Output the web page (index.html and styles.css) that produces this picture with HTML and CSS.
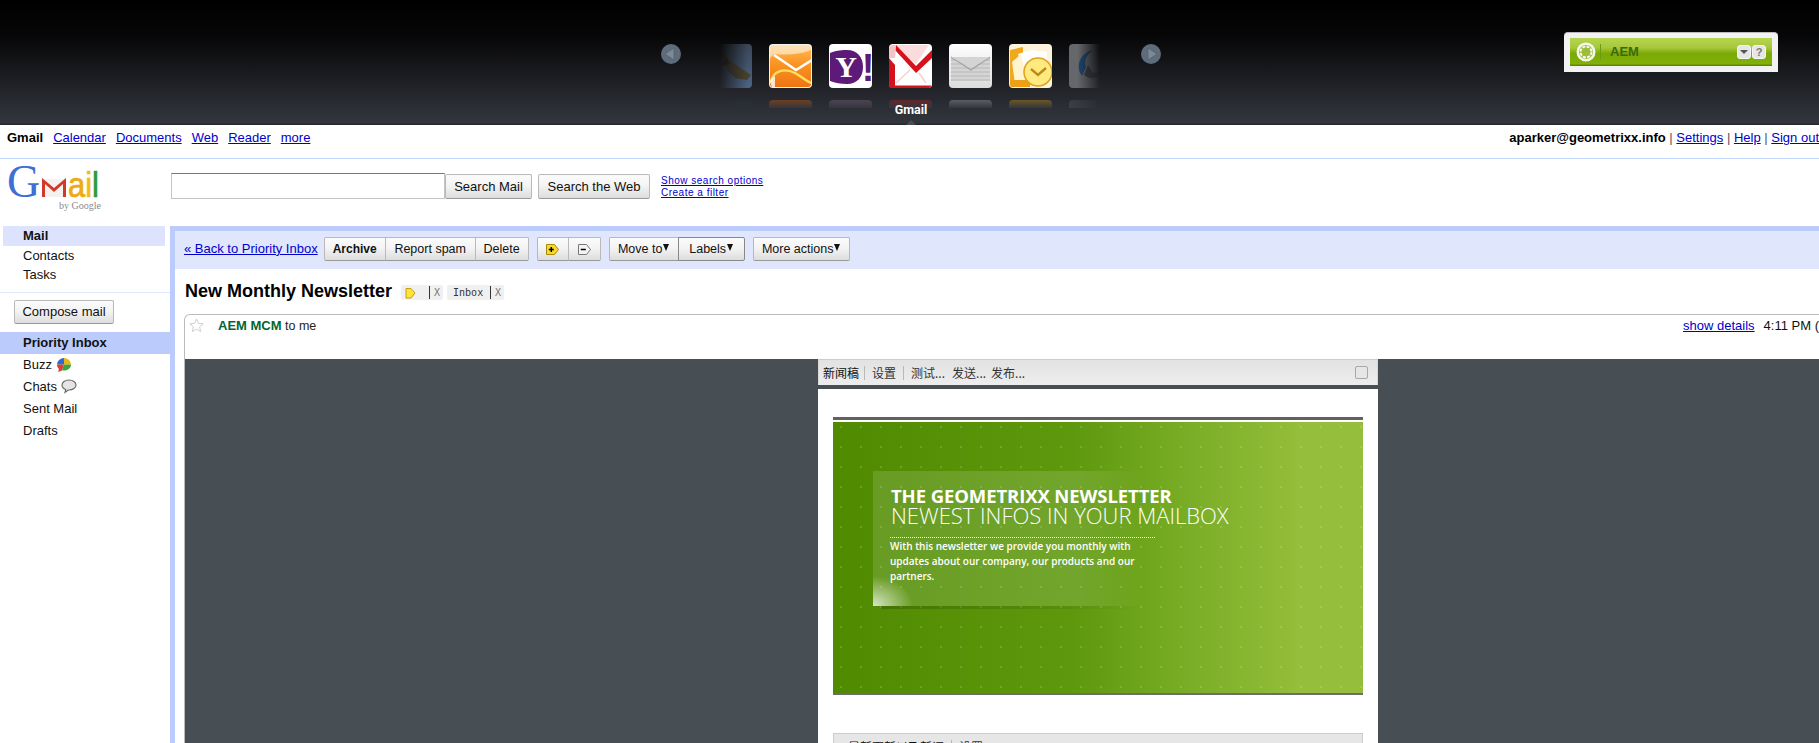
FILE: index.html
```html
<!DOCTYPE html>
<html lang="en">
<head>
  <meta charset="UTF-8">
  <title>Gmail - New Monthly Newsletter</title>
  <link rel="stylesheet" href="styles.css">
</head>
<body>
<div class="page">

  <header class="dock">
    <div class="carousel">
      <svg class="arrow" viewBox="0 0 20 20"><circle cx="10" cy="10" r="10" fill="#5f6c7c"/><path d="M4 10l9-6v12z" fill="#7d8997" stroke="#4f5a68" stroke-width=".6"/></svg>

      <div class="tile tile-first">
        <svg viewBox="0 0 43 44">
          <defs><linearGradient id="hkBg" x1="0" y1="0" x2="0" y2="1"><stop offset="0" stop-color="#3a4556"/><stop offset="1" stop-color="#4c6484"/></linearGradient></defs>
          <rect width="43" height="44" rx="4" fill="url(#hkBg)"/>
          <path d="M12 6l8 9 10 8 12 8-4 5-12-2-8-8-5-10z" fill="#4a412c"/>
          <path d="M18 14l-6 8 8-2z" fill="#2c261a"/>
        </svg>
        <div class="shine shine-hawk"></div>
      </div>

      <div class="tile">
        <svg viewBox="0 0 43 44">
          <defs><linearGradient id="hmBg" x1="0" y1="0" x2="0" y2="1"><stop offset="0" stop-color="#ffbe5c"/><stop offset=".45" stop-color="#fa9422"/><stop offset="1" stop-color="#ee7414"/></linearGradient></defs>
          <rect width="43" height="44" rx="4" fill="#f4f4f4"/>
          <rect x="1" y="1" width="41" height="42" rx="3" fill="url(#hmBg)"/>
          <path d="M1 1h41v5C30 11 16 11 5 10L1 14z" fill="#fff" opacity=".55"/>
          <path d="M5 11l22 15 16-10" fill="none" stroke="#fff" stroke-width="2.6"/>
          <path d="M2 38c2-12 14-14 24-9 7 4 11 8 16 10" fill="none" stroke="#ffe05c" stroke-width="2.4"/>
          <path d="M1 38c1-3 3-5 5-6v11H3z" fill="#fff" opacity=".8"/>
        </svg>
        <div class="shine shine-hotmail"></div>
      </div>

      <div class="tile">
        <svg viewBox="0 0 43 44">
          <rect width="43" height="44" rx="4" fill="#fff"/>
          <path d="M1 9C8 6 14 6 18 6c10 0 16 7 16 17s-6 17-16 17c-6 0-12-1-17-3z" fill="#5e1a78"/>
          <text class="yh-letter" x="17" y="33">Y</text>
          <text class="yh-bang" x="39" y="37">!</text>
        </svg>
        <div class="shine shine-yahoo"></div>
      </div>

      <div class="tile">
        <svg viewBox="0 0 43 44">
          <rect width="43" height="44" rx="4" fill="#fff"/>
          <path d="M3 1h37l-13 19z" fill="#fbdcdc"/>
          <path d="M0 14l6 7v23H3a3 3 0 0 1-3-3z" fill="#d5121c"/>
          <path d="M1 41.500h41v.5a2 2 0 0 1-2 2H3a2 2 0 0 1-2-2z" fill="#d5121c"/>
          <path d="M7 1l20 21L43 6v8L27 29 6 6z" fill="#d5121c"/>
          <path d="M7 39l14-13M37 39L30 29" stroke="#f6d0d1" stroke-width="1.500"/>
          <path d="M0 4a4 4 0 0 1 4-3l3 1-1 12H0z" fill="#f6c4c6"/>
        </svg>
        <div class="shine shine-gmail"></div>
      </div>

      <div class="tile">
        <svg viewBox="0 0 43 44">
          <defs><linearGradient id="grBg" x1="0" y1="0" x2="0" y2="1"><stop offset="0" stop-color="#fff"/><stop offset=".35" stop-color="#f2f2f2"/><stop offset="1" stop-color="#dcdcdc"/></linearGradient></defs>
          <rect width="43" height="44" rx="4" fill="url(#grBg)"/>
          <path d="M2 13h39v24H2z" fill="#c6c6c6"/>
          <path d="M1 18h41M1 22h41M1 26h41M1 30h41M1 34h41" stroke="#fff" stroke-width="1" opacity=".5"/>
          <path d="M2 13l20 13 19-13" fill="none" stroke="#a2a2a2" stroke-width="1.300"/>
          <path d="M2 13h39L22 24z" fill="#d4d4d4"/>
        </svg>
        <div class="shine shine-grey"></div>
      </div>

      <div class="tile">
        <svg viewBox="0 0 43 44">
          <rect width="43" height="44" rx="4" fill="#fdf3dc"/>
          <path d="M1 6l13-3v38H3a2 2 0 0 1-2-2z" fill="#f2a81d"/>
          <path d="M9 10l13-4 16 2v14H14z" fill="#fff"/>
          <path d="M3 18l9-8 6 30H6z" fill="#fff3d0"/>
          <path d="M1 36h20v7H3a2 2 0 0 1-2-2z" fill="#eca017"/>
          <circle cx="29" cy="28" r="14" fill="#ffe981" stroke="#dfa31c" stroke-width="1.500"/>
          <path d="M22 25l7 6 8-7" fill="none" stroke="#c08a14" stroke-width="2.400"/>
        </svg>
        <div class="shine shine-outlook"></div>
      </div>

      <div class="tile tile-last">
        <svg viewBox="0 0 43 44">
          <rect width="43" height="44" rx="4" fill="#66676b"/>
          <path d="M13 32C6 22 11 9 24 6c-7 5-9 11-7 17z" fill="#1d456e"/>
          <path d="M15 31c6 5 13 4 18-3l-9 1-5-8z" fill="#3a3c42"/>
        </svg>
        <div class="shine shine-bird"></div>
      </div>

      <svg class="arrow" viewBox="0 0 20 20"><circle cx="10" cy="10" r="10" fill="#5f6c7c"/><path d="M16 10l-9-6v12z" fill="#7d8997" stroke="#4f5a68" stroke-width=".6"/></svg>

      <div class="dock-label">Gmail</div>
      <div class="dock-caret"></div>
    </div>

    <div class="gadget">
      <div class="gadget-bar">
        <svg class="gadget-logo" viewBox="0 0 20 20"><circle cx="10" cy="10" r="9.500" fill="#f6f9ee"/><circle cx="10" cy="10" r="7" fill="#9cbc3a"/><circle cx="10" cy="10" r="5.500" fill="none" stroke="#fff" stroke-width="1.800" stroke-dasharray="3 1.300"/></svg>
        <span class="gadget-name">AEM</span>
        <span class="gadget-btn"><i class="gadget-down"></i></span>
        <span class="gadget-btn gadget-help">?</span>
      </div>
    </div>
  </header>

  <nav class="topnav">
    <div class="topnav-left">
      <b class="topnav-current">Gmail</b>
      <a href="#">Calendar</a>
      <a href="#">Documents</a>
      <a href="#">Web</a>
      <a href="#">Reader</a>
      <a href="#">more</a>
    </div>
    <div class="topnav-right">
      <b>aparker@geometrixx.info</b> | <a href="#">Settings</a> | <a href="#">Help</a> | <a href="#">Sign out</a>
    </div>
  </nav>

  <div class="searchbar">
    <svg class="gmail-logo" viewBox="0 0 94 48">
      <text class="logo-g" x="0" y="33">G</text>
      <path d="M35 15h24v18H35z" fill="#f4f1ee"/>
      <path d="M35 33V14l12 10 12-10v19h-3V20l-9 8-9-8v13z" fill="#d3392b"/>
      <text class="logo-ail" x="61" y="33" textLength="31" lengthAdjust="spacingAndGlyphs"><tspan fill="#efa912" stroke="#efa912">a</tspan><tspan fill="#f2bb12" stroke="#f2bb12">i</tspan><tspan fill="#2c9a3e" stroke="#2c9a3e">l</tspan></text>
      <text class="logo-by" x="52" y="45">by Google</text>
    </svg>
    <form class="search-form">
      <input class="search-input" type="text">
      <button class="btn search-mail" type="button">Search Mail</button>
      <button class="btn search-web" type="button">Search the Web</button>
      <div class="search-links">
        <a href="#">Show search options</a>
        <a href="#">Create a filter</a>
      </div>
    </form>
  </div>

  <div class="content">
    <aside class="sidebar">
      <ul class="side-top">
        <li class="side-mail">Mail</li>
        <li>Contacts</li>
        <li>Tasks</li>
      </ul>
      <div class="compose-wrap">
        <button class="btn compose" type="button">Compose mail</button>
      </div>
      <ul class="side-labels">
        <li class="side-active">Priority Inbox</li>
        <li>Buzz
          <svg class="side-icon" viewBox="0 0 16 16"><path d="M8 1a7 6.500 0 0 1 7 6.500H8z" fill="#e9b80f"/><path d="M8 1a7 6.500 0 0 0-7 6.500h7z" fill="#2f68d8"/><path d="M1 7.500c0 2 1 3.500 2 4.500l-1 3 4-1.500 2-6z" fill="#d5402f"/><path d="M15 7.500c0 3.500-3 6-7 6-.7 0-1.400 0-2-.2L8 7.500z" fill="#3fa43d"/></svg>
        </li>
        <li>Chats
          <svg class="side-icon chat-icon" viewBox="0 0 16 15"><path d="M8 1c4 0 7 2.300 7 5s-3 5-7 5l-1 .2-3 2.300.7-3C2.300 9.600 1 8 1 6c0-2.700 3-5 7-5z" fill="#e4e4e4" stroke="#666" stroke-width="1.100"/></svg>
        </li>
        <li>Sent Mail</li>
        <li>Drafts</li>
      </ul>
    </aside>

    <main class="panel">
      <div class="toolbar">
        <a class="back-link" href="#">« Back to Priority Inbox</a>
        <div class="btn-group">
          <button class="btn btn-strong" type="button">Archive</button>
          <button class="btn btn-spam" type="button">Report spam</button>
          <button class="btn btn-delete" type="button">Delete</button>
        </div>
        <div class="btn-group">
          <button class="btn btn-icon" type="button">
            <svg viewBox="0 0 15 13"><path d="M1.500 1.500h8l4 5-4 5h-8z" fill="#f7d92c" stroke="#a98a06"/><path d="M3.800 6.500h5M6.300 4v5" stroke="#000" stroke-width="1.500"/></svg>
          </button>
          <button class="btn btn-icon" type="button">
            <svg viewBox="0 0 15 13"><path d="M1.500 1.500h8l4 5-4 5h-8z" fill="#f4f4f4" stroke="#777"/><path d="M3.800 6.500h5" stroke="#000" stroke-width="1.500"/></svg>
          </button>
        </div>
        <div class="btn-group">
          <button class="btn btn-move" type="button">Move to<i class="caret"></i></button>
          <button class="btn btn-labels" type="button">Labels<i class="caret"></i></button>
        </div>
        <div class="btn-group">
          <button class="btn btn-more" type="button">More actions<i class="caret"></i></button>
        </div>
      </div>

      <div class="subject">
        <h1>New Monthly Newsletter</h1>
        <span class="tag tag-first">
          <svg class="tag-icon" viewBox="0 0 11 12"><path d="M1 1.500h5l4 4.500-4 5H1z" fill="#fde53a" stroke="#c79b12"/></svg>
          <span class="tag-x">X</span>
        </span>
        <span class="tag tag-inbox">Inbox<span class="tag-x">X</span></span>
      </div>

      <div class="message">
        <div class="message-head">
          <svg class="star" viewBox="0 0 16 16"><path d="M8 1l2.100 4.700 5 .5-3.800 3.300 1.100 5L8 11.900l-4.400 2.600 1.100-5L.9 6.200l5-.5z" fill="#fff" stroke="#ccc"/></svg>
          <span class="sender"><b>AEM MCM</b> to me</span>
          <span class="message-meta"><a href="#">show details</a><span class="message-time">4:11 PM (9 minutes ago)</span></span>
        </div>

        <div class="message-body">
          <div class="newsletter">
            <div class="cq-bar">
              <span class="cq-main">新闻稿</span>
              <span class="cq-item">设置</span>
              <span class="cq-item">测试...</span>
              <span class="cq-plain">发送...</span>
              <span class="cq-plain">发布...</span>
              <i class="cq-check"></i>
            </div>
            <div class="sheet">
              <div class="rule-top"></div>
              <div class="banner">
                <div class="promo">
                  <div class="promo-title">THE GEOMETRIXX NEWSLETTER</div>
                  <div class="promo-sub">NEWEST INFOS IN YOUR MAILBOX</div>
                  <p class="promo-text">With this newsletter we provide you monthly with<br>updates about our company, our products and our<br>partners.</p>
                </div>
              </div>
              <div class="rule-bottom"></div>
              <div class="cq-bar cq-bar-second">
                <span class="cq-main">最新更新以及新闻</span>
                <span class="cq-item">设置</span>
              </div>
            </div>
          </div>
        </div>
      </div>
    </main>
  </div>

</div>
</body>
</html>
```

FILE: styles.css
```css
html, body {
  margin: 0;
  height: 743px;
  overflow: hidden;
  background-color: #ffffff;
}

body {
  font-family: "Liberation Sans", Arial, sans-serif;
  font-size: 13px;
  color: #000000;
}

a {
  color: #0000cc;
}

ul {
  list-style: none;
  margin: 0;
  padding: 0;
}

.page {
  width: 2016px;
}

/* dock */
.dock {
  display: flex;
  align-items: flex-start;
  height: 125px;
  padding-left: 661px;
  box-sizing: border-box;
  background: linear-gradient(#000000 0, #060607 28%, #33363e 98%, #222326 100%);
}

.carousel {
  position: relative;
  display: flex;
  align-items: flex-start;
  width: 500px;
  height: 125px;
  padding-top: 44px;
  box-sizing: border-box;
}

.arrow {
  width: 20px;
  height: 20px;
  flex: none;
}

.tile {
  width: 43px;
  margin-left: 17px;
  flex: none;
}

.tile svg {
  display: block;
  width: 43px;
  height: 44px;
}

.tile-first {
  margin-left: 28px;
}

.tile-last {
  margin-right: 29px;
}

.tile-first svg {
  -webkit-mask-image: linear-gradient(to right, transparent 25%, #000 90%);
  mask-image: linear-gradient(to right, transparent 25%, #000 90%);
}

.tile-last svg {
  -webkit-mask-image: linear-gradient(to right, #000 20%, transparent 72%);
  mask-image: linear-gradient(to right, #000 20%, transparent 72%);
}

.shine {
  height: 8px;
  margin-top: 12px;
  border-radius: 4px 4px 0 0;
}

.shine-hawk { background: linear-gradient(to right, transparent 30%, #2a2f38); opacity: .8; }
.shine-hotmail { background: linear-gradient(#6f3f20, #33363e); }
.shine-yahoo { background: linear-gradient(#4c4252, #33363e); }
.shine-gmail { background: linear-gradient(#64262a, #33363e); }
.shine-grey { background: linear-gradient(#5c5d60, #33363e); }
.shine-outlook { background: linear-gradient(#6c5724, #33363e); }
.shine-bird { background: linear-gradient(to right, #3d3f44, transparent 70%); }

.dock-label {
  position: absolute;
  left: 0;
  right: 0;
  top: 103px;
  text-align: center;
  font-family: Roboto, sans-serif;
  font-size: 12.500px;
  font-weight: 700;
  line-height: 14px;
  color: #ffffff;
}

.dock-caret {
  position: absolute;
  left: 245px;
  bottom: 0;
  width: 10px;
  height: 5px;
  background-color: #4a4c52;
  clip-path: polygon(50% 0, 100% 100%, 0 100%);
}

/* AEM gadget */
.gadget {
  margin: 32px 0 0 403px;
  width: 214px;
  height: 40px;
  padding: 5px 6px 6px;
  box-sizing: border-box;
  background-color: #f2f2f2;
  border-radius: 4px 4px 0 0;
  border-top: 1px solid #bbbbbb;
}

.gadget-bar {
  display: flex;
  align-items: center;
  height: 28px;
  padding: 0 6px;
  box-sizing: border-box;
  background: linear-gradient(#b7d552 0, #a6c83a 35%, #7ba905 55%, #82b00a 92%, #4f7a00 100%);
}

.gadget-logo {
  width: 20px;
  height: 20px;
  flex: none;
}

.gadget-name {
  flex: 1;
  margin-left: 4px;
  padding-left: 9px;
  border-left: 1px solid #6f9a12;
  font-size: 13px;
  font-weight: 700;
  line-height: 16px;
  color: #3c6a0a;
}

.gadget-btn {
  display: flex;
  align-items: center;
  justify-content: center;
  width: 14px;
  height: 14px;
  margin-left: 1px;
  background-color: #e6e6e6;
  border-radius: 3px;
  border: 1px solid #f6f6f6;
  box-sizing: border-box;
}

.gadget-down {
  border-left: 4px solid transparent;
  border-right: 4px solid transparent;
  border-top: 4px solid #555555;
}

.gadget-help {
  font-size: 11px;
  font-weight: 700;
  color: #777777;
}

/* top links */
.topnav {
  display: flex;
  justify-content: space-between;
  height: 34px;
  padding: 5px 197px 0 7px;
  box-sizing: border-box;
  border-bottom: 1px solid #c3d9ff;
  line-height: 15px;
  color: #555555;
}

.topnav-left {
  display: flex;
  gap: 10px;
}

.topnav-current {
  color: #000000;
}

.topnav-right b {
  color: #000000;
}

/* logo and search */
.searchbar {
  display: flex;
  height: 67px;
  padding-left: 7px;
}

.gmail-logo {
  width: 94px;
  height: 48px;
  margin-top: 5px;
  flex: none;
}

.logo-g {
  font-family: "Liberation Serif", serif;
  font-size: 46px;
  fill: #3f6fd6;
}

.logo-ail {
  font-family: "Liberation Sans", sans-serif;
  font-size: 35px;
  stroke-width: .7px;
}

.logo-by {
  font-family: "Liberation Serif", serif;
  font-size: 10px;
  fill: #8a8a8a;
}

.search-form {
  display: flex;
  align-items: flex-start;
  margin: 14px 0 0 70px;
}

.search-input {
  width: 274px;
  height: 26px;
  padding: 0;
  box-sizing: border-box;
  border: 1px solid #c4c4c4;
  border-top-color: #777777;
}

.search-links {
  display: flex;
  flex-direction: column;
  margin: 2px 0 0 11px;
  font-size: 10px;
  line-height: 12px;
  letter-spacing: .5px;
}

.btn {
  height: 24px;
  padding: 0;
  font-family: inherit;
  font-size: 12.500px;
  color: #111111;
  background: linear-gradient(#fbfbfb 0, #f4f4f4 45%, #dddddd 100%);
  border: 1px solid #b9b9b9;
  border-bottom-color: #999999;
  border-radius: 2px;
  white-space: nowrap;
}

.search-mail {
  width: 87px;
  height: 25px;
  margin-top: 1px;
  font-size: 13px;
}

.search-web {
  width: 112px;
  height: 25px;
  margin: 1px 0 0 6px;
  font-size: 13px;
}

/* main area */
.content {
  display: flex;
}

.sidebar {
  width: 170px;
  flex: none;
}

.side-top {
  padding-bottom: 7px;
  border-bottom: 1px solid #e0e6fc;
}

.side-top li {
  height: 19.500px;
  padding-left: 23px;
  line-height: 19px;
  color: #111111;
}

.side-top .side-mail {
  margin: 0 5px 0 3px;
  padding-left: 20px;
  font-weight: 700;
  background-color: #dde3fd;
}

.compose-wrap {
  padding: 7px 0 8px 14px;
}

.compose {
  display: block;
  width: 100px;
  font-size: 13px;
}

.side-labels li {
  display: flex;
  align-items: center;
  gap: 4px;
  height: 22px;
  padding-left: 23px;
  color: #111111;
}

.side-labels .side-active {
  font-weight: 700;
  background-color: #bbccfc;
}

.side-icon {
  width: 16px;
  height: 16px;
}

.chat-icon {
  height: 15px;
}

.panel {
  flex: 1;
  min-width: 0;
  border-left: 5px solid #bbccfc;
  border-top: 5px solid #bbccfc;
}

.toolbar {
  display: flex;
  align-items: center;
  height: 38px;
  padding: 0 0 2px 9px;
  box-sizing: border-box;
  background-color: #e0e6fc;
}

.back-link {
  margin: 0 6px 2px 0;
}

.btn-group {
  display: flex;
  margin-right: 8px;
}

.btn-group .btn {
  margin-left: -1px;
  border-radius: 0;
}

.btn-group .btn:first-child {
  margin-left: 0;
  border-radius: 2px 0 0 2px;
}

.btn-group .btn:last-child {
  border-radius: 0 2px 2px 0;
}

.btn-group .btn:only-child {
  border-radius: 2px;
}

.btn-strong {
  width: 62px;
  font-size: 12px;
  font-weight: 700;
}

.btn-spam {
  width: 91px;
}

.btn-delete {
  width: 54px;
}

.btn-icon {
  width: 32.500px;
}

.btn-icon svg {
  display: block;
  width: 15px;
  height: 13px;
  margin: 0 auto;
}

.btn-move {
  width: 70px;
}

.btn-labels {
  width: 67px;
  border-color: #888888;
}

.btn-more {
  width: 97px;
}

.caret {
  display: inline-block;
  margin-left: 1px;
  vertical-align: 2px;
  border-left: 3.500px solid transparent;
  border-right: 3.500px solid transparent;
  border-top: 7px solid #111111;
}

.subject {
  display: flex;
  align-items: center;
  height: 45px;
  padding: 0 0 1px 10px;
  box-sizing: border-box;
}

.subject h1 {
  margin: 0 9px 0 0;
  font-size: 18px;
  line-height: 22px;
}

.tag {
  display: flex;
  align-items: center;
  justify-content: space-between;
  height: 15px;
  margin: 2px 4px 0 0;
  padding: 0 3px 0 6px;
  box-sizing: border-box;
  background-color: #f0f0f0;
  border-radius: 2px;
  font-family: "DejaVu Sans Mono", monospace;
  font-size: 10px;
  color: #333333;
}

.tag-first {
  width: 42px;
  padding-left: 4px;
}

.tag-inbox {
  width: 57px;
}

.tag-icon {
  width: 11px;
  height: 12px;
  margin-top: 2px;
}

.tag-x {
  padding-left: 4px;
  border-left: 1px solid #333333;
  line-height: 13px;
  color: #777777;
}

.message {
  margin: 0 4px 0 9px;
  border: 1px solid #bbbbbb;
  border-bottom: none;
  border-top-left-radius: 6px;
}

.message-head {
  display: flex;
  align-items: flex-start;
  height: 44px;
  padding: 2px 0 0 4px;
  box-sizing: border-box;
  font-size: 12.500px;
  line-height: 15px;
}

.star {
  width: 15px;
  height: 15px;
  margin-top: 1px;
  flex: none;
}

.sender {
  margin: 1px 0 0 14px;
  color: #222222;
}

.sender b {
  font-size: 13px;
  color: #006633;
}

.message-meta {
  margin: 1px 0 0 auto;
  padding-right: 106px;
  font-size: 13px;
  white-space: nowrap;
}

.message-time {
  margin-left: 9px;
  color: #111111;
}

.message-body {
  height: 400px;
  background-color: #474f55;
}

/* newsletter inside the mail */
.newsletter {
  width: 560px;
  margin: 0 auto;
}

.cq-bar {
  display: flex;
  align-items: center;
  height: 26px;
  padding-left: 4px;
  box-sizing: border-box;
  border-top: 1px solid #cccccc;
  border-left: 1px solid #d8d8d8;
  border-right: 1px solid #d8d8d8;
  background: linear-gradient(#e2e2e2, #ededed);
  font-family: "Noto Sans CJK SC", sans-serif;
  font-size: 12px;
  color: #333333;
}

.cq-main {
  padding-right: 5px;
  color: #111111;
}

.cq-item {
  padding: 0 7px;
  border-left: 1px solid #b8b8b8;
  line-height: 14px;
}

.cq-plain {
  margin-right: 5px;
}

.cq-check {
  width: 11px;
  height: 11px;
  margin-left: auto;
  margin-right: 9px;
  background-color: #e6e6e6;
  border: 1px solid #a8a8a8;
  border-radius: 2px;
}

.sheet {
  height: 360px;
  margin-top: 4px;
  padding: 28px 15px 0;
  background-color: #ffffff;
}

.rule-top {
  height: 3px;
  margin-bottom: 2px;
  background-color: #616161;
}

.banner {
  height: 271px;
  padding: 49px 0 0 40px;
  box-sizing: border-box;
  background-color: #528d00;
  background-image:
    radial-gradient(circle at 8px 5px, rgba(255, 255, 255, .15) 0, rgba(255, 255, 255, .15) 1px, transparent 1.500px),
    linear-gradient(to right, #4f8a00 0, #5d980d 45%, #7bae28 68%, #94be3b 88%, #94be3b 100%);
  background-size: 20px 20px, 100% 100%;
}

.promo {
  position: relative;
  width: 268px;
  height: 135px;
  padding: 16px 0 0 18px;
  box-sizing: border-box;
  white-space: nowrap;
  color: #ffffff;
  background:
    radial-gradient(ellipse 40px 30px at 0 100%, rgba(255, 255, 255, .75), transparent),
    linear-gradient(to right, rgba(255, 255, 255, .13) 0, rgba(255, 255, 255, .13) 75%, transparent 100%);
}

.promo::after {
  content: "";
  position: absolute;
  left: 8px;
  right: 0;
  bottom: -3px;
  height: 3px;
  background: linear-gradient(to right, rgba(40, 70, 0, .35), rgba(40, 70, 0, .15) 60%, transparent);
}

.promo-title {
  font-family: "Open Sans", sans-serif;
  font-size: 18.500px;
  font-weight: 700;
  line-height: 18px;
  letter-spacing: -.1px;
}

.promo-sub {
  font-family: "Open Sans", sans-serif;
  font-size: 22px;
  font-weight: 300;
  line-height: 21px;
}

.promo-text {
  width: 265px;
  margin: 11px 0 0 -1px;
  padding-top: 1px;
  border-top: 1px dotted #ffffff;
  font-family: "Open Sans", sans-serif;
  font-size: 10px;
  font-weight: 600;
  line-height: 15px;
}

.rule-bottom {
  height: 2px;
  margin-bottom: 38px;
  background-color: #6d6d6d;
}

.cq-bar-second {
  padding-left: 14px;
  border-color: #cccccc;
  background: #e6e6e6;
}

.cq-bar-second .cq-main {
  padding-right: 7px;
}

.yh-letter {
  font-family: "Liberation Serif", serif;
  font-size: 30px;
  font-weight: 700;
  text-anchor: middle;
  fill: #ffffff;
}

.yh-bang {
  font-family: "Liberation Sans", sans-serif;
  font-size: 38px;
  font-weight: 700;
  text-anchor: middle;
  fill: #5e1a78;
}
```
